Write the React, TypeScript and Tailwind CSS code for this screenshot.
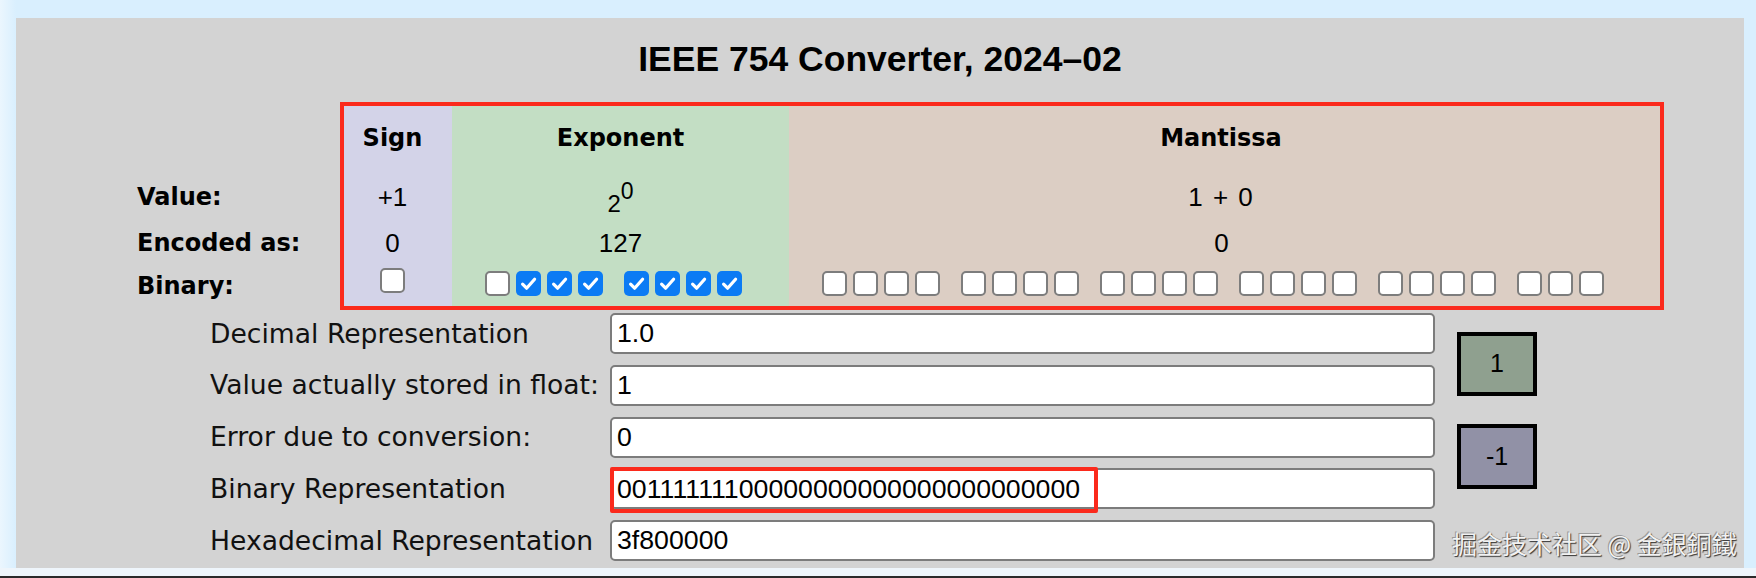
import React from "react";

function Box({ checked }: { checked: boolean }) {
  if (checked) {
    return (
      <div className="w-[25px] h-[25px] rounded-[5px] bg-[#0b7bf4] flex items-center justify-center shrink-0">
        <svg width="25" height="25" viewBox="0 0 25 25">
          <path d="M6.6 13.2 L10.6 17.2 L18.6 8.2" fill="none" stroke="#ffffff" strokeWidth="3.2" strokeLinecap="round" strokeLinejoin="round" />
        </svg>
      </div>
    );
  }
  return <div className="w-[25px] h-[25px] rounded-[5px] bg-white border-2 border-[#7d7d7d] shrink-0" />;
}

function Group({ bits }: { bits: boolean[] }) {
  return (
    <div className="flex gap-[6px]">
      {bits.map((b, i) => (
        <Box key={i} checked={b} />
      ))}
    </div>
  );
}

const mantissaGroups = [4, 4, 4, 4, 4, 3];

const formRows = [
  { label: "Decimal Representation", value: "1.0" },
  { label: "Value actually stored in float:", value: "1" },
  { label: "Error due to conversion:", value: "0" },
  { label: "Binary Representation", value: "00111111100000000000000000000000", mark: true },
  { label: "Hexadecimal Representation", value: "3f800000" },
];

export default function App() {
  return (
    <div className="relative w-[1756px] h-[578px] overflow-hidden bg-[linear-gradient(90deg,#ebf6fe_0px,#d9effe_16px)] flex flex-col">
      <div className="h-[18px] shrink-0" />
      <div className="ml-[16px] w-[1728px] h-[550px] shrink-0 bg-[#d3d3d3] flex flex-col">
        <h1 className="mt-[24px] h-[35px] leading-[35px] text-center text-[35.5px] font-bold font-['Liberation_Sans',Arial,sans-serif] text-black">
          IEEE 754 Converter, 2024–02
        </h1>

        <div className="mt-[25px] ml-[121px] flex">
          {/* row labels */}
          <div className="w-[203px] pt-[4px] flex flex-col font-['DejaVu_Sans',sans-serif] font-bold text-[24px] text-black">
            <div className="h-[60px]" />
            <div className="h-[62px] flex items-center">Value:</div>
            <div className="h-[30px] flex items-center">Encoded as:</div>
            <div className="h-[48px] flex items-center pt-[8px]">Binary:</div>
          </div>

          <div className="w-[1324px] h-[208px] border-4 border-[#fb2a1c] flex">
            {/* Sign */}
            <div className="w-[108px] bg-[#d3d3e8] flex flex-col pr-[11px]">
              <div className="h-[60px] pt-[4px] flex items-center justify-center font-['DejaVu_Sans',sans-serif] font-bold text-[24px]">Sign</div>
              <div className="h-[62px] flex items-center justify-center font-['Liberation_Sans',Arial,sans-serif] text-[26px]">+1</div>
              <div className="h-[30px] flex items-center justify-center font-['Liberation_Sans',Arial,sans-serif] text-[26px]">0</div>
              <div className="h-[48px] flex items-center justify-center">
                <div className="-mt-[3px]">
                  <Box checked={false} />
                </div>
              </div>
            </div>
            {/* Exponent */}
            <div className="w-[337px] bg-[#c3dec4] flex flex-col">
              <div className="h-[60px] pt-[4px] flex items-center justify-center font-['DejaVu_Sans',sans-serif] font-bold text-[24px]">Exponent</div>
              <div className="h-[62px] flex items-center justify-center font-['Liberation_Sans',Arial,sans-serif]">
                <span className="relative top-[7px] text-[24px]">2</span>
                <span className="relative -top-[6px] text-[23px]">0</span>
              </div>
              <div className="h-[30px] flex items-center justify-center font-['Liberation_Sans',Arial,sans-serif] text-[26px]">127</div>
              <div className="h-[48px] flex items-center justify-center pr-[14px] pt-[3px]">
                <div className="flex gap-[21px]">
                  <Group bits={[false, true, true, true]} />
                  <Group bits={[true, true, true, true]} />
                </div>
              </div>
            </div>
            {/* Mantissa */}
            <div className="w-[871px] bg-[#dccec4] flex flex-col">
              <div className="h-[60px] pt-[4px] flex items-center justify-center pr-[7px] font-['DejaVu_Sans',sans-serif] font-bold text-[24px]">Mantissa</div>
              <div className="h-[62px] flex items-center justify-center pr-[8px] font-['Liberation_Sans',Arial,sans-serif] text-[26px] [word-spacing:3px]">1 + 0</div>
              <div className="h-[30px] flex items-center justify-center pr-[6px] font-['Liberation_Sans',Arial,sans-serif] text-[26px]">0</div>
              <div className="h-[48px] flex items-center justify-center pr-[23px] pt-[3px]">
                <div className="flex gap-[21px]">
                  {mantissaGroups.map((n, i) => (
                    <Group key={i} bits={Array.from({ length: n }, () => false)} />
                  ))}
                </div>
              </div>
            </div>
          </div>
        </div>

        <div className="mt-[3px] ml-[194px] flex">
          <div className="grid grid-cols-[400px_825px] gap-y-[10.75px]">
            {formRows.map((r) => (
              <React.Fragment key={r.label}>
                <div className="h-[41px] flex items-center font-['DejaVu_Sans',sans-serif] text-[26.6px] text-[#111] whitespace-nowrap">
                  {r.label}
                </div>
                <div className="relative">
                  <div className="h-[41px] border-2 border-[#7c7c7c] rounded-[5px] bg-white flex items-center pl-[5px] font-['Liberation_Sans',Arial,sans-serif] text-[26.7px] text-black">
                    {r.value}
                  </div>
                  {r.mark && (
                    <div className="absolute left-0 top-[-1px] w-[488px] h-[46px] border-4 border-[#fb2a1c] rounded-[2px]" />
                  )}
                </div>
              </React.Fragment>
            ))}
          </div>
          <div className="ml-[22px] pt-[19px] flex flex-col gap-[28px]">
            <div className="w-[80px] h-[64px] border-4 border-black bg-[#8fa08f] flex items-center justify-center font-['Liberation_Sans',Arial,sans-serif] text-[25px] text-black">
              1
            </div>
            <div className="w-[80px] h-[65px] border-4 border-black bg-[#9191a6] flex items-center justify-center font-['Liberation_Sans',Arial,sans-serif] text-[25px] text-black">
              -1
            </div>
          </div>
        </div>
      </div>
      <div className="h-[8px] shrink-0 bg-[#eef5fb]" />
      <div className="h-[2px] shrink-0 bg-[#2a2a2a]" />

      <div className="absolute left-[1452px] top-[530px] leading-[26px] text-[25px] text-[#f2f2f2] whitespace-nowrap font-['Noto_Sans_CJK_SC',sans-serif] [text-shadow:1px_1px_1px_#333,-1px_-1px_0_#9a9a9a]">
        掘金技术社区 @ 金銀銅鐵
      </div>
    </div>
  );
}
